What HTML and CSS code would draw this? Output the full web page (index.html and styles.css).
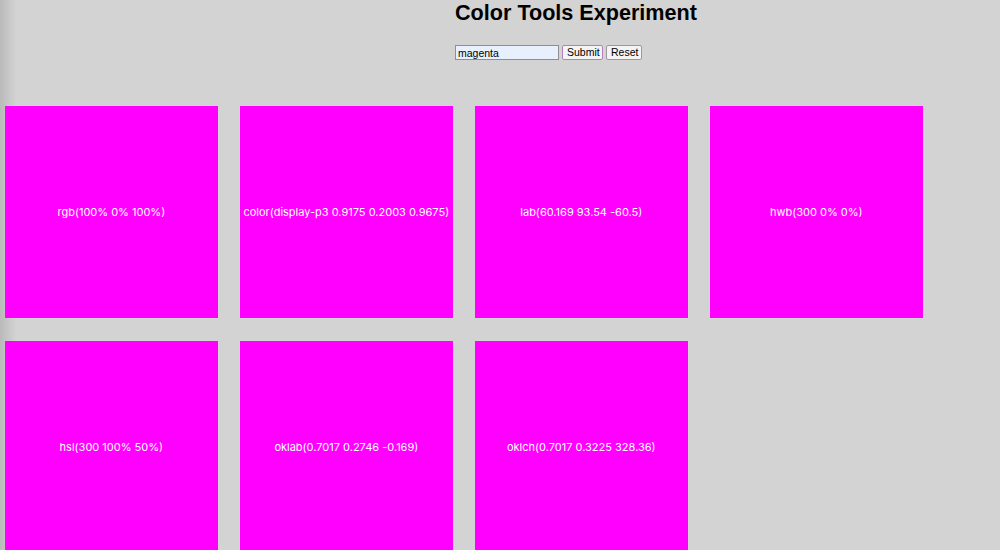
FILE: index.html
```html
<!DOCTYPE html>
<html>
<head>
<meta charset="utf-8">
<title>Color Tools Experiment</title>
<link rel="stylesheet" href="styles.css">
</head>
<body>
<header class="top">
  <h1 class="title">Color Tools Experiment</h1>
  <form class="form">
    <input class="field" type="text" value="magenta">
    <button class="btn btn-submit" type="button">Submit</button>
    <button class="btn btn-reset" type="button">Reset</button>
  </form>
</header>
<main class="grid">
  <div class="tile">rgb(100% 0% 100%)</div>
  <div class="tile">color(display-p3 0.9175 0.2003 0.9675)</div>
  <div class="tile">lab(60.169 93.54 -60.5)</div>
  <div class="tile">hwb(300 0% 0%)</div>
  <div class="tile">hsl(300 100% 50%)</div>
  <div class="tile">oklab(0.7017 0.2746 -0.169)</div>
  <div class="tile">oklch(0.7017 0.3225 328.36)</div>
</main>
</body>
</html>
```
FILE: styles.css
```css
html, body {
  margin: 0;
  padding: 0;
  height: 100%;
  overflow: hidden;
}
body {
  background-color: #d3d3d3;
  background-image: linear-gradient(to right, rgba(0,0,0,0.12), rgba(0,0,0,0) 16px);
  font-family: "Liberation Sans", Arial, sans-serif;
}
.top {
  padding-left: 455px;
}
.title {
  margin: 0;
  font-size: 21.6px;
  font-weight: bold;
  line-height: 25px;
  color: #000;
}
.form {
  display: flex;
  gap: 3px;
  margin-top: 20px;
  align-items: center;
}
.field {
  box-sizing: border-box;
  width: 104px;
  height: 15px;
  padding: 0 2px;
  border: 1px solid #8f8f8f;
  background: #e8f0fe;
  font-family: "Liberation Sans", Arial, sans-serif;
  font-size: 10.5px;
  color: #000;
  outline: none;
}
.btn {
  box-sizing: border-box;
  height: 15px;
  padding: 0 4px;
  border: 1px solid #9a9a9a;
  border-radius: 2px;
  background: #f4f4f4;
  font-family: "Liberation Sans", Arial, sans-serif;
  font-size: 10.5px;
  line-height: 13px;
  color: #000;
}
.btn-submit {
  width: 41px;
  border-color: #b77fc0;
}
.btn-reset {
  width: 36px;
}
.grid {
  display: grid;
  grid-template-columns: repeat(4, 212.7px);
  grid-auto-rows: 212.3px;
  column-gap: 22.3px;
  row-gap: 22.7px;
  padding-left: 5px;
  margin-top: 46px;
}
.tile {
  background: #ff00ff;
  display: flex;
  align-items: center;
  justify-content: center;
  color: #fff;
  font-family: Inter, "Noto Sans", sans-serif;
  font-size: 11px;
  font-weight: 400;
  text-align: center;
  white-space: nowrap;
}
```
